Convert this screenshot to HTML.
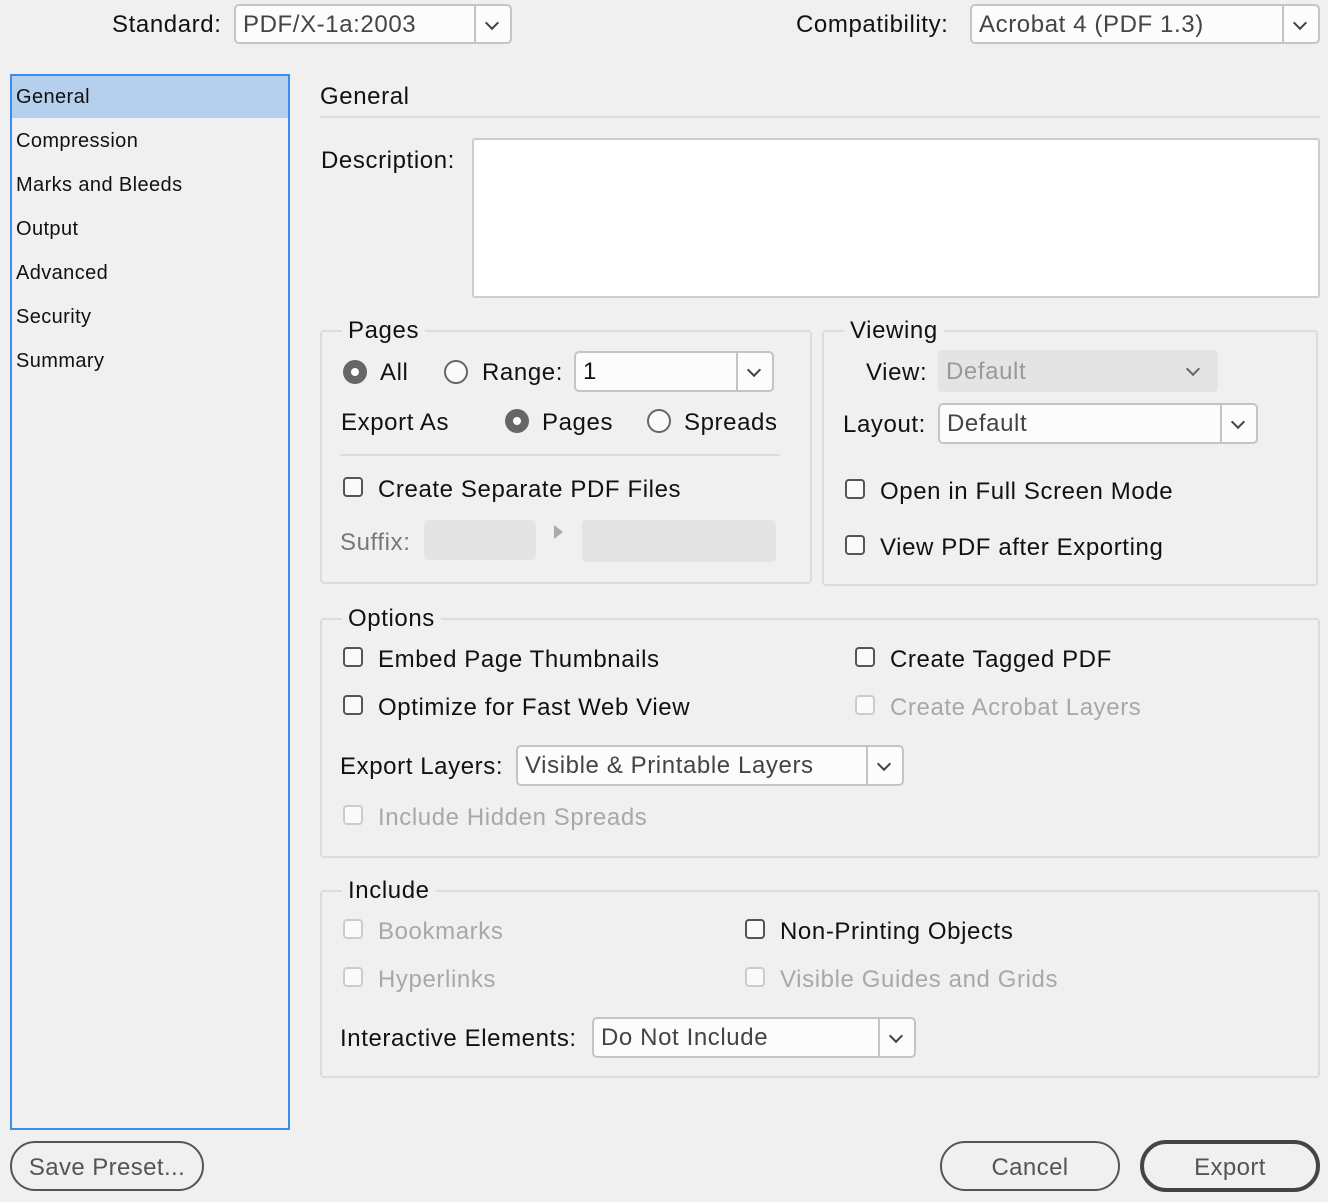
<!DOCTYPE html><html><head><style>
body{margin:0;width:1328px;height:1202px;background:#f0f0f0;font-family:"Liberation Sans",sans-serif;position:relative;overflow:hidden;color:#111}
.t{position:absolute;font-size:24px;line-height:30px;white-space:nowrap;letter-spacing:0.6px;margin-top:1px}
.s{position:absolute;font-size:20px;line-height:26px;left:16px;letter-spacing:0.4px;margin-top:1px}
.g{color:#a8a8a8}
.dd{position:absolute;background:#fcfcfc;border:2px solid #c4c4c4;border-radius:5px;box-sizing:border-box;font-size:24px;line-height:38px;padding-left:7px;color:#444;letter-spacing:0.6px}
.dd:after{content:"";position:absolute;right:0;top:0;bottom:0;width:34px;border-left:2px solid #c4c4c4}
.dd i{position:absolute;right:13px;top:12px;width:8px;height:8px;border-right:2px solid #444;border-bottom:2px solid #444;transform:rotate(45deg)}
.grp{position:absolute;border:2px solid #dcdcdc;border-radius:4px;box-sizing:border-box}
.lg{position:absolute;background:#f0f0f0;padding:0 6px;font-size:24px;line-height:30px;letter-spacing:0.6px;margin-top:1px}
.cb{position:absolute;width:20px;height:20px;border:2px solid #555;border-radius:4px;box-sizing:border-box;background:#fafafa}
.cb.d{border-color:#ccc}
.rb{position:absolute;width:24px;height:24px;border:2px solid #666;border-radius:50%;box-sizing:border-box;background:#fafafa}
.rb.on{background:#666;border:none}
.rb.on:after{content:"";position:absolute;left:8px;top:8px;width:8px;height:8px;border-radius:50%;background:#fff}
.btn{position:absolute;border:2px solid #555;border-radius:26px;box-sizing:border-box;text-align:center;font-size:24px;color:#555;line-height:50px;letter-spacing:0.4px}
</style></head><body>
<div class="t" style="left:112px;top:9px">Standard:</div>
<div class="dd" style="left:234px;top:4px;width:278px;height:40px">PDF/X-1a:2003<i></i></div>
<div class="t" style="left:796px;top:9px">Compatibility:</div>
<div class="dd" style="left:970px;top:4px;width:350px;height:40px">Acrobat 4 (PDF 1.3)<i></i></div>

<div style="position:absolute;left:10px;top:74px;width:280px;height:1056px;border:2px solid #3b8ee8;box-sizing:border-box;background:#f0f0f0"></div>
<div style="position:absolute;left:12px;top:76px;width:276px;height:42px;background:#b5d0ec"></div>
<div class="s" style="top:83px">General</div>
<div class="s" style="top:127px">Compression</div>
<div class="s" style="top:171px">Marks and Bleeds</div>
<div class="s" style="top:215px">Output</div>
<div class="s" style="top:259px">Advanced</div>
<div class="s" style="top:303px">Security</div>
<div class="s" style="top:347px">Summary</div>

<div class="t" style="left:320px;top:81px">General</div>
<div style="position:absolute;left:320px;top:116px;width:1000px;height:2px;background:#dcdcdc"></div>
<div class="t" style="left:321px;top:145px">Description:</div>
<div style="position:absolute;left:472px;top:138px;width:848px;height:160px;background:#fff;border:2px solid #ccc;border-radius:3px;box-sizing:border-box"></div>

<div class="grp" style="left:320px;top:330px;width:492px;height:254px"></div>
<div class="lg" style="left:342px;top:315px">Pages</div>
<div class="rb on" style="left:343px;top:360px"></div><div class="t" style="left:380px;top:357px">All</div>
<div class="rb" style="left:444px;top:360px"></div><div class="t" style="left:482px;top:357px">Range:</div>
<div class="dd" style="left:574px;top:351px;width:200px;height:41px;color:#111">1<i></i></div>
<div class="t" style="left:341px;top:407px">Export As</div>
<div class="rb on" style="left:505px;top:409px"></div><div class="t" style="left:542px;top:407px">Pages</div>
<div class="rb" style="left:647px;top:409px"></div><div class="t" style="left:684px;top:407px">Spreads</div>
<div style="position:absolute;left:340px;top:454px;width:440px;height:2px;background:#dcdcdc"></div>
<div class="cb" style="left:343px;top:477px"></div><div class="t" style="left:378px;top:474px">Create Separate PDF Files</div>
<div class="t" style="left:340px;top:527px;color:#777">Suffix:</div>
<div style="position:absolute;left:424px;top:520px;width:112px;height:40px;background:#e4e4e4;border-radius:4px"></div>
<div style="position:absolute;left:554px;top:525px;border-left:9px solid #aaa;border-top:7px solid transparent;border-bottom:7px solid transparent"></div>
<div style="position:absolute;left:582px;top:520px;width:194px;height:42px;background:#e4e4e4;border-radius:4px"></div>

<div class="grp" style="left:822px;top:330px;width:496px;height:256px"></div>
<div class="lg" style="left:844px;top:315px">Viewing</div>
<div class="t" style="left:866px;top:357px">View:</div>
<div style="position:absolute;left:938px;top:350px;width:280px;height:42px;background:#e4e4e4;border-radius:4px;font-size:24px;line-height:44px;padding-left:8px;box-sizing:border-box;color:#999;letter-spacing:0.6px">Default<span style="position:absolute;right:20px;top:14px;width:8px;height:8px;border-right:2px solid #666;border-bottom:2px solid #666;transform:rotate(45deg)"></span></div>
<div class="t" style="left:843px;top:409px">Layout:</div>
<div class="dd" style="left:938px;top:403px;width:320px;height:41px">Default<i></i></div>
<div class="cb" style="left:845px;top:479px"></div><div class="t" style="left:880px;top:476px">Open in Full Screen Mode</div>
<div class="cb" style="left:845px;top:535px"></div><div class="t" style="left:880px;top:532px">View PDF after Exporting</div>

<div class="grp" style="left:320px;top:618px;width:1000px;height:240px"></div>
<div class="lg" style="left:342px;top:603px">Options</div>
<div class="cb" style="left:343px;top:647px"></div><div class="t" style="left:378px;top:644px">Embed Page Thumbnails</div>
<div class="cb" style="left:855px;top:647px"></div><div class="t" style="left:890px;top:644px">Create Tagged PDF</div>
<div class="cb" style="left:343px;top:695px"></div><div class="t" style="left:378px;top:692px">Optimize for Fast Web View</div>
<div class="cb d" style="left:855px;top:695px"></div><div class="t g" style="left:890px;top:692px">Create Acrobat Layers</div>
<div class="t" style="left:340px;top:751px">Export Layers:</div>
<div class="dd" style="left:516px;top:745px;width:388px;height:41px">Visible &amp; Printable Layers<i></i></div>
<div class="cb d" style="left:343px;top:805px"></div><div class="t g" style="left:378px;top:802px">Include Hidden Spreads</div>

<div class="grp" style="left:320px;top:890px;width:1000px;height:188px"></div>
<div class="lg" style="left:342px;top:875px">Include</div>
<div class="cb d" style="left:343px;top:919px"></div><div class="t g" style="left:378px;top:916px">Bookmarks</div>
<div class="cb" style="left:745px;top:919px"></div><div class="t" style="left:780px;top:916px">Non-Printing Objects</div>
<div class="cb d" style="left:343px;top:967px"></div><div class="t g" style="left:378px;top:964px">Hyperlinks</div>
<div class="cb d" style="left:745px;top:967px"></div><div class="t g" style="left:780px;top:964px">Visible Guides and Grids</div>
<div class="t" style="left:340px;top:1023px">Interactive Elements:</div>
<div class="dd" style="left:592px;top:1017px;width:324px;height:41px">Do Not Include<i></i></div>

<div class="btn" style="left:10px;top:1141px;width:194px;height:50px">Save Preset...</div>
<div class="btn" style="left:940px;top:1141px;width:180px;height:50px">Cancel</div>
<div class="btn" style="left:1140px;top:1140px;width:180px;height:52px;border-width:4px;border-color:#444;line-height:48px">Export</div>
</body></html>
